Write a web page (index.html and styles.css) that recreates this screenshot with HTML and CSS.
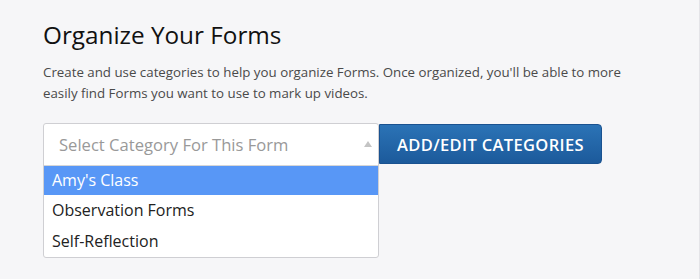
FILE: index.html
```html
<!DOCTYPE html>
<html>
<head>
<meta charset="utf-8">
<link rel="stylesheet" href="styles.css">
</head>
<body>
<div class="page">
  <h1 class="title">Organize Your Forms</h1>
  <p class="desc">Create and use categories to help you organize Forms. Once organized, you'll be able to more easily find Forms you want to use to mark up videos.</p>
  <div class="row">
    <div class="select">
      <div class="select-head">
        <span class="placeholder">Select Category For This Form</span>
        <span class="arrow"></span>
      </div>
      <ul class="options">
        <li class="option active">Amy's Class</li>
        <li class="option">Observation Forms</li>
        <li class="option">Self-Reflection</li>
      </ul>
    </div>
    <button class="btn">ADD/EDIT CATEGORIES</button>
  </div>
</div>
</body>
</html>
```
FILE: styles.css
```css
html, body {
  margin: 0;
  padding: 0;
  background: #f6f6f8;
  height: 100%;
}
body {
  font-family: "Open Sans", "Liberation Sans", sans-serif;
}
.page {
  padding: 20px 0 0 43px;
  border-right: 1px solid #e4e4e8;
  height: 100%;
  box-sizing: border-box;
}
.title {
  margin: 0;
  font-size: 24.3px;
  font-weight: 400;
  color: #111;
  line-height: 30px;
}
.desc {
  margin: 12px 0 0;
  width: 590px;
  font-size: 13.3px;
  line-height: 21px;
  color: #4a4a4a;
}
.row {
  display: flex;
  align-items: flex-start;
  margin-top: 19px;
}
.select {
  width: 336px;
  box-sizing: border-box;
  border: 1px solid #cfcfd3;
  border-radius: 3px;
  background: #fff;
}
.select-head {
  height: 41px;
  display: flex;
  align-items: center;
  justify-content: space-between;
  padding: 0 6px 0 15px;
  border-bottom: 1px solid #d6d6d6;
}
.placeholder {
  font-size: 16.6px;
  color: #999;
}
.arrow {
  width: 0;
  height: 0;
  border-left: 4px solid transparent;
  border-right: 4px solid transparent;
  border-bottom: 6px solid #c4c4c4;
  margin-top: -1px;
}
.options {
  list-style: none;
  margin: 0;
  padding: 0;
}
.option {
  height: 31px;
  line-height: 31px;
  padding-left: 8px;
  font-size: 16px;
  color: #222;
}
.option.active {
  background: #5897f6;
  color: #fff;
  height: 29px;
  line-height: 29px;
}
.btn {
  margin-top: 1px;
  width: 223px;
  height: 40px;
  border: 1px solid #1a5290;
  border-radius: 0 4px 4px 0;
  background: linear-gradient(#2b73b6, #1c5a9b);
  color: #fff;
  font-family: "Open Sans", "Liberation Sans", sans-serif;
  font-size: 16.5px;
  font-weight: 600;
  letter-spacing: 0.35px;
  padding: 0;
}
```
